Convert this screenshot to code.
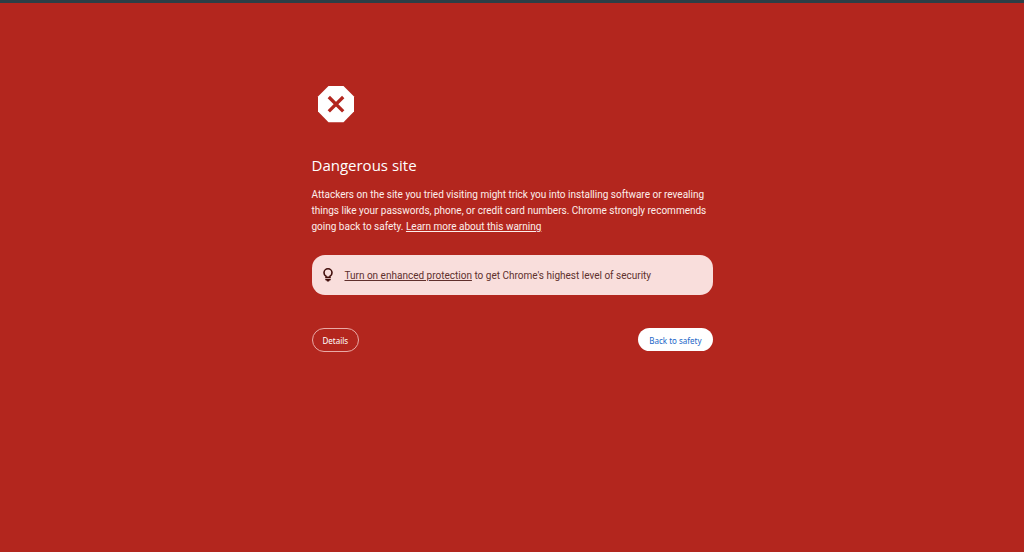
<template>
  <div class="page">
    <main class="warning">
      <svg class="stop" viewBox="0 0 48 48" aria-hidden="true">
        <path fill="#fff" d="M16.5 6h15L42 16.5v15L31.5 42.2h-15L6 31.5v-15z" />
        <path d="M16.8 17l14.4 14.4M31.2 17L16.8 31.4" fill="none" stroke="#b3261e" stroke-width="3.3" />
      </svg>
      <h1>Dangerous site</h1>
      <p class="message">
        Attackers on the site you tried visiting might trick you into installing software or revealing
        things like your passwords, phone, or credit card numbers. Chrome strongly recommends
        going back to safety. <a href="#">Learn more about this warning</a>
      </p>
      <div class="tip">
        <svg class="bulb" viewBox="0 0 16 16" aria-hidden="true">
          <path
            d="M6 10.4V9.3C4.7 8.6 4 7.4 4 5.8a4 4 0 0 1 8 0c0 1.6-.7 2.8-2 3.5v1.1z"
            fill="none"
            stroke="#410e0b"
            stroke-width="1.6"
          />
          <path d="M5.3 12h5.4v1.2H5.3zM6.4 13.2h3.2c0 .8-.6 1.3-1.6 1.3s-1.6-.5-1.6-1.3z" fill="#410e0b" />
        </svg>
        <p><a href="#">Turn on enhanced protection</a> to get Chrome's highest level of security</p>
      </div>
      <div class="actions">
        <button type="button" class="details">Details</button>
        <button type="button" class="safety">Back to safety</button>
      </div>
    </main>
  </div>
</template>

<style>
body {
  background: #b3261e;
}
</style>

<style scoped>
.page {
  box-sizing: border-box;
  min-height: 100vh;
  padding: 77px 24px 24px;
  border-top: 3px solid #2c3f46;
  background: #b3261e;
  color: #fdeeec;
  font-family: Roboto, sans-serif;
  font-size: 10px;
}
.warning {
  max-width: 401px;
  margin: 0 auto;
}
.stop {
  display: block;
  width: 48px;
  height: 48px;
}
h1 {
  margin: 26px 0 11px;
  color: #fff;
  font-family: "Open Sans", sans-serif;
  font-size: 15px;
  font-weight: 400;
  line-height: 22px;
}
p {
  margin: 0;
  line-height: 16px;
}
a {
  color: inherit;
  text-underline-offset: 1px;
}
.tip {
  display: flex;
  align-items: center;
  gap: 9px;
  margin-top: 20px;
  padding: 12px 8px;
  border-radius: 13px;
  background: #f9dedc;
  color: #60302d;
}
.tip p {
  line-height: 14px;
  padding-top: 2px;
}
.bulb {
  width: 16px;
  height: 16px;
}
.actions {
  display: flex;
  justify-content: space-between;
  align-items: flex-start;
  margin-top: 33px;
}
button {
  box-sizing: border-box;
  padding: 1px 11px 0;
  border-radius: 12px;
  font-family: "Noto Sans", sans-serif;
  font-size: 8px;
  white-space: nowrap;
}
.details {
  height: 24px;
  padding: 1px 10px 0;
  border: 1px solid #e9aaa6;
  background: transparent;
  color: #fff;
}
.safety {
  height: 23px;
  border: 0;
  background: #fff;
  color: #1a66c8;
}
</style>
